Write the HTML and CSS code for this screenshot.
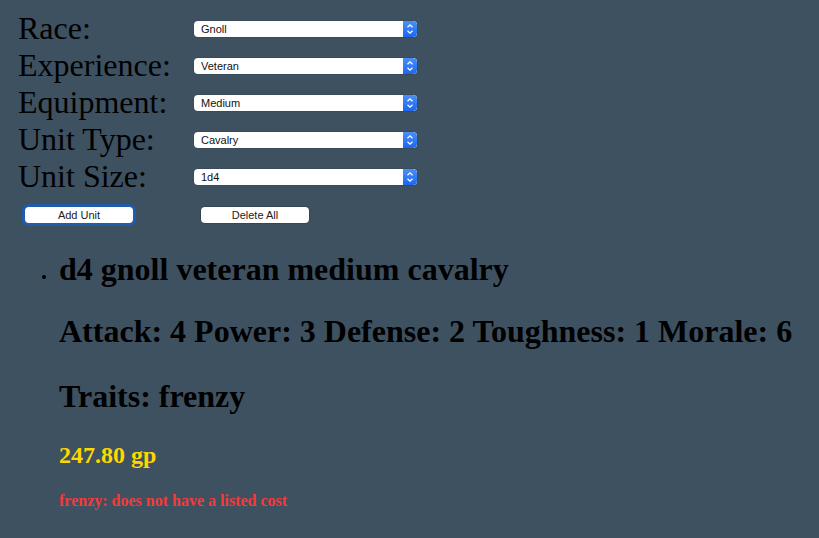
FILE: index.html
```html
<!DOCTYPE html>
<html>
<head>
<meta charset="utf-8">
<link rel="stylesheet" href="styles.css">
</head>
<body>
<div class="form">
  <div class="row"><span class="label">Race:</span><div class="select"><span class="value">Gnoll</span><span class="arrow"><svg width="14" height="16" viewBox="0 0 14 16"><path d="M4.5 6.2 L7 3.8 L9.5 6.2 M4.5 9.8 L7 12.2 L9.5 9.8" fill="none" stroke="#fff" stroke-width="1.3"/></svg></span></div></div>
  <div class="row"><span class="label">Experience:</span><div class="select"><span class="value">Veteran</span><span class="arrow"><svg width="14" height="16" viewBox="0 0 14 16"><path d="M4.5 6.2 L7 3.8 L9.5 6.2 M4.5 9.8 L7 12.2 L9.5 9.8" fill="none" stroke="#fff" stroke-width="1.3"/></svg></span></div></div>
  <div class="row"><span class="label">Equipment:</span><div class="select"><span class="value">Medium</span><span class="arrow"><svg width="14" height="16" viewBox="0 0 14 16"><path d="M4.5 6.2 L7 3.8 L9.5 6.2 M4.5 9.8 L7 12.2 L9.5 9.8" fill="none" stroke="#fff" stroke-width="1.3"/></svg></span></div></div>
  <div class="row"><span class="label">Unit Type:</span><div class="select"><span class="value">Cavalry</span><span class="arrow"><svg width="14" height="16" viewBox="0 0 14 16"><path d="M4.5 6.2 L7 3.8 L9.5 6.2 M4.5 9.8 L7 12.2 L9.5 9.8" fill="none" stroke="#fff" stroke-width="1.3"/></svg></span></div></div>
  <div class="row"><span class="label">Unit Size:</span><div class="select"><span class="value">1d4</span><span class="arrow"><svg width="14" height="16" viewBox="0 0 14 16"><path d="M4.5 6.2 L7 3.8 L9.5 6.2 M4.5 9.8 L7 12.2 L9.5 9.8" fill="none" stroke="#fff" stroke-width="1.3"/></svg></span></div></div>
  <div class="buttons">
    <button class="btn btn-focus">Add Unit</button>
    <button class="btn btn-delete">Delete All</button>
  </div>
</div>
<ul class="units">
  <li class="unit">
    <div class="unit-name">d4 gnoll veteran medium cavalry</div>
    <div class="stats">Attack: 4 Power: 3 Defense: 2 Toughness: 1 Morale: 6</div>
    <div class="traits">Traits: frenzy</div>
    <div class="cost">247.80 gp</div>
    <div class="warning">frenzy: does not have a listed cost</div>
  </li>
</ul>
</body>
</html>
```
FILE: styles.css
```css
html, body {
  margin: 0;
  padding: 0;
}
body {
  background: #3e5160;
  font-family: "Liberation Serif", "Times New Roman", serif;
  color: #000;
  width: 819px;
  height: 538px;
  overflow: hidden;
}
.form {
  padding: 9px 0 0 18px;
}
.row {
  display: flex;
  align-items: flex-start;
  height: 37px;
}
.label {
  width: 176px;
  font-size: 32px;
  line-height: 37px;
  margin-top: 1px;
}
.select {
  width: 223px;
  height: 16px;
  margin-top: 12px;
  background: #fff;
  border-radius: 4px;
  display: flex;
  align-items: center;
  justify-content: space-between;
  overflow: hidden;
  box-shadow: 0 0 0 0.5px rgba(0,0,0,0.15);
}
.value {
  font-family: "Liberation Sans", Arial, sans-serif;
  font-size: 11px;
  padding-left: 7px;
  color: #111;
}
.arrow {
  width: 14px;
  height: 16px;
  background: linear-gradient(#4a8ff9, #1c67f2);
  border-radius: 0 4px 4px 0;
  display: flex;
}
.buttons {
  display: flex;
  align-items: center;
  padding: 13px 0 0 7px;
}
.btn {
  font-family: "Liberation Sans", Arial, sans-serif;
  font-size: 11px;
  height: 16px;
  width: 108px;
  padding: 0;
  background: #fff;
  border: none;
  border-radius: 4px;
  color: #222;
  line-height: 16px;
  box-shadow: 0 0 0 0.5px rgba(0,0,0,0.25);
}
.btn-focus {
  box-shadow: 0 0 0 3px #1f5cab;
  border-radius: 4px;
}
.btn-delete {
  margin-left: 68px;
}
.units {
  list-style: none;
  margin: 0;
  padding: 0 0 0 59px;
}
.unit {
  position: relative;
  font-weight: bold;
  padding-top: 28px;
}
.unit::before {
  content: "";
  position: absolute;
  left: -17px;
  top: 52px;
  width: 4px;
  height: 4px;
  border-radius: 50%;
  background: #000;
}
.unit-name, .stats, .traits {
  font-size: 32px;
  line-height: 36px;
}
.stats {
  margin-top: 26px;
}
.traits {
  margin-top: 29px;
}
.cost {
  font-size: 24px;
  line-height: 28px;
  margin-top: 27px;
  color: #ffd700;
}
.warning {
  font-size: 16px;
  line-height: 18px;
  margin-top: 23px;
  color: #f43a3a;
}
```
